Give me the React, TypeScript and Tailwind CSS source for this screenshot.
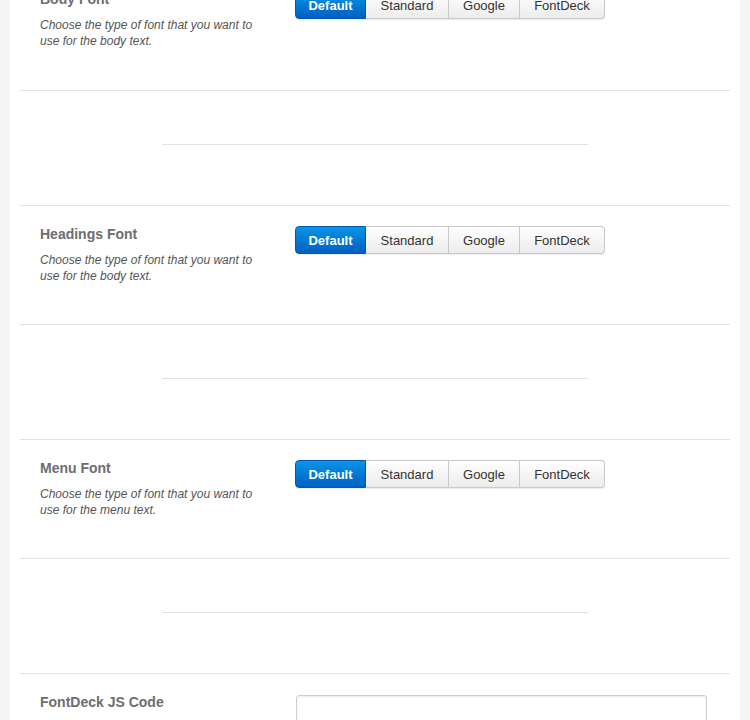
import React, { useState } from "react";

interface FontOption {
  id: string;
  title: string;
  description: string;
}

const fontOptions: FontOption[] = [
  {
    id: "body",
    title: "Body Font",
    description: "Choose the type of font that you want to use for the body text.",
  },
  {
    id: "headings",
    title: "Headings Font",
    description: "Choose the type of font that you want to use for the body text.",
  },
  {
    id: "menu",
    title: "Menu Font",
    description: "Choose the type of font that you want to use for the menu text.",
  },
];

const choices = [
  { label: "Default", width: "w-[71px]" },
  { label: "Standard", width: "w-[83px]" },
  { label: "Google", width: "w-[71px]" },
  { label: "FontDeck", width: "w-[85px]" },
];

const FontSwitch: React.FC = () => {
  const [selected, setSelected] = useState("Default");

  return (
    <div className="flex h-[28px] -mt-px rounded-[4px] shadow-[0_1px_1px_rgba(0,0,0,0.08)]">
      {choices.map((choice, index) => {
        const active = selected === choice.label;
        const first = index === 0;
        const last = index === choices.length - 1;
        return (
          <button
            key={choice.label}
            onClick={() => setSelected(choice.label)}
            className={`${choice.width} flex items-center justify-center text-[13px] leading-none border ${
              first ? "rounded-l-[4px]" : "border-l-0"
            } ${last ? "rounded-r-[4px]" : ""} ${
              active
                ? "bg-gradient-to-b from-[#0c95e6] to-[#0060c2] border-[#0058b0] text-white font-bold"
                : "bg-gradient-to-b from-white to-[#ececec] border-[#c9c9c9] text-[#333]"
            }`}
          >
            {choice.label}
          </button>
        );
      })}
    </div>
  );
};

const FontSection: React.FC<{ option: FontOption; first?: boolean }> = ({
  option,
  first,
}) => (
  <div
    className={`h-[119px] flex pl-[20px] pt-[21px] ${
      first ? "-mt-[29px]" : "border-t border-[#e2e2e2]"
    }`}
  >
    <div className="w-[255px] shrink-0">
      <h3 className="text-[14px] leading-[18px] font-bold text-[#6e6e6e] -mt-[2px]">
        {option.title}
      </h3>
      <p className="mt-[9px] w-[220px] text-[12px] leading-[16px] italic text-[#555]">
        {option.description}
      </p>
    </div>
    <FontSwitch />
  </div>
);

const Spacer: React.FC = () => (
  <div className="h-[115px] border-t border-[#e2e2e2] pt-[53px] flex justify-center">
    <div className="w-[426px] h-px bg-[#e2e2e2]" />
  </div>
);

export default function App() {
  return (
    <div
      className="min-h-screen bg-[#f5f5f5] px-[10px] overflow-hidden"
      style={{ fontFamily: '"Liberation Sans", Arial, sans-serif' }}
    >
      <div className="bg-white min-h-screen px-[10px]">
        {fontOptions.map((option, index) => (
          <React.Fragment key={option.id}>
            <FontSection option={option} first={index === 0} />
            <Spacer />
          </React.Fragment>
        ))}
        <div className="border-t border-[#e2e2e2] flex pl-[20px] pt-[21px]">
          <div className="w-[256px] shrink-0">
            <h3 className="text-[14px] leading-[18px] font-bold text-[#6e6e6e] -mt-[2px]">
              FontDeck JS Code
            </h3>
          </div>
          <textarea className="w-[411px] h-[100px] border border-[#cfcfcf] rounded-[3px] shadow-[inset_0_1px_2px_rgba(0,0,0,0.08)] resize-none" />
        </div>
      </div>
    </div>
  );
}
